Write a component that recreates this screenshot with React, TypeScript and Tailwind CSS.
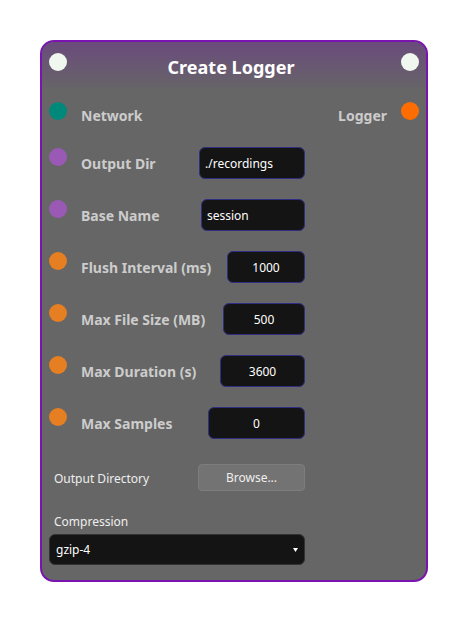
import React from 'react'

const font = { fontFamily: '"Noto Sans", "Open Sans", sans-serif' }

type Row = { label: string; value: string; width: string; dot: string; center?: boolean }

const rows: Row[] = [
  { label: 'Output Dir', value: './recordings', width: 'w-[106px]', dot: 'bg-[#9b59b6]' },
  { label: 'Base Name', value: 'session', width: 'w-[104px]', dot: 'bg-[#9b59b6]' },
  { label: 'Flush Interval (ms)', value: '1000', width: 'w-[78px]', dot: 'bg-[#e67e22]', center: true },
  { label: 'Max File Size (MB)', value: '500', width: 'w-[82px]', dot: 'bg-[#e67e22]', center: true },
  { label: 'Max Duration (s)', value: '3600', width: 'w-[85px]', dot: 'bg-[#e67e22]', center: true },
  { label: 'Max Samples', value: '0', width: 'w-[97px]', dot: 'bg-[#e67e22]', center: true },
]

const Dot = ({ color, className = '' }: { color: string; className?: string }) => (
  <div className={`w-[18px] h-[18px] rounded-full shrink-0 ${color} ${className}`} />
)

const InputRow = ({ row }: { row: Row }) => (
  <div className="flex items-center w-[256px] h-[32px]">
    <Dot color={row.dot} className="self-start mt-[1px]" />
    <span className="ml-[14px] pt-[2px] text-[14px] font-bold text-[#cccccc] leading-[20px] whitespace-nowrap">{row.label}</span>
    <div
      className={`ml-auto h-[32px] ${row.width} rounded-[6px] bg-[#141414] border border-[#2e2e82] flex items-center px-[5px] pt-[1px] text-[12px] text-white ${row.center ? 'justify-center' : ''}`}
    >
      {row.value}
    </div>
  </div>
)

export default function App() {
  return (
    <div className="w-[468px] h-[622px] bg-white pt-[40px] pl-[40px]" style={font}>
      <div className="w-[388px] rounded-[14px] border-2 border-[#7a14b0] bg-[#666666] overflow-hidden pb-[15px]">
        {/* header */}
        <div className="h-[50px] bg-gradient-to-b from-[#6a4a7c] to-[#666666] flex items-start px-[7px] pt-[11px]">
          <Dot color="bg-[#f0f7ee]" />
          <div className="flex-1 text-center text-white font-bold text-[18px] leading-[24px] mt-[2px] pr-[6px]">
            Create Logger
          </div>
          <Dot color="bg-[#f0f7ee]" />
        </div>

        <div className="px-[7px]">
          {/* io row */}
          <div className="flex items-start h-[26px] mt-[10px]">
            <Dot color="bg-[#00897b]" />
            <span className="ml-[14px] pt-[1px] text-[14px] font-bold text-[#cccccc] leading-[26px]">Network</span>
            <span className="ml-auto mr-[14px] pt-[1px] text-[14px] font-bold text-[#cccccc] leading-[26px]">Logger</span>
            <Dot color="bg-[#ff6d00]" />
          </div>

          {/* parameter rows */}
          <div className="flex flex-col gap-[20px] mt-[19px]">
            {rows.map((r) => (
              <InputRow key={r.label} row={r} />
            ))}
          </div>

          {/* output directory */}
          <div className="flex items-center w-[256px] mt-[25px]">
            <span className="ml-[5px] pt-[2px] text-[12px] text-[#eeeeee]">Output Directory</span>
            <button
              type="button"
              className="ml-auto w-[107px] h-[27px] rounded-[4px] bg-[#737373] border border-[#7d7d7d] pt-[1px] text-[12px] text-[#eeeeee]"
            >
              Browse...
            </button>
          </div>

          {/* compression */}
          <div className="mt-[23px] ml-[5px] text-[12px] leading-[16px] text-[#eeeeee]">Compression</div>
          <div className="mt-[4px] w-[256px] h-[31px] rounded-[6px] bg-[#141414] border border-[#333333] flex items-center pl-[6px] pr-[6px] pt-[1px] text-[12px] text-white">
            <span>gzip-4</span>
            <svg className="ml-auto" width="5" height="4" viewBox="0 0 5 4">
              <polygon points="0,0 5,0 2.5,4" fill="#ffffff" />
            </svg>
          </div>
        </div>
      </div>
    </div>
  )
}
